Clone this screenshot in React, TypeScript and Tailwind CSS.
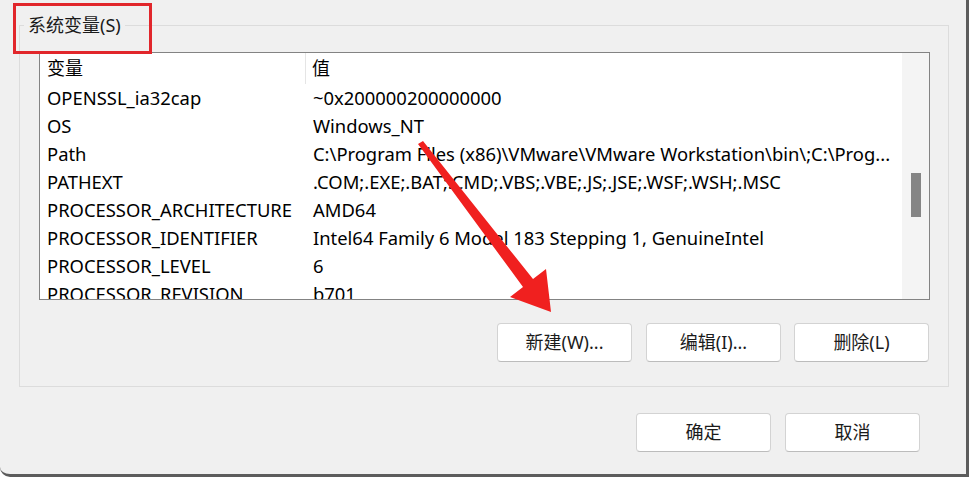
import React from "react";

const rows: [string, string][] = [
  ["OPENSSL_ia32cap", "~0x200000200000000"],
  ["OS", "Windows_NT"],
  ["Path", "C:\\Program Files (x86)\\VMware\\VMware Workstation\\bin\\;C:\\Prog..."],
  ["PATHEXT", ".COM;.EXE;.BAT;.CMD;.VBS;.VBE;.JS;.JSE;.WSF;.WSH;.MSC"],
  ["PROCESSOR_ARCHITECTURE", "AMD64"],
  ["PROCESSOR_IDENTIFIER", "Intel64 Family 6 Model 183 Stepping 1, GenuineIntel"],
  ["PROCESSOR_LEVEL", "6"],
  ["PROCESSOR_REVISION", "b701"],
];

const font = "font-['Noto_Sans','Noto_Sans_CJK_SC',sans-serif]";

const DlgButton = ({ label }: { label: string }) => (
  <button className="w-[135px] h-[39px] bg-white border border-[#d3d3d3] border-b-[#bcbcbc] rounded-[4px] text-[18px] text-[#1b1b1b] flex items-center justify-center">
    {label}
  </button>
);

const App = () => {
  return (
    <div
      className={`relative w-[969px] h-[477px] overflow-hidden bg-[#f0f0f0] border-r-[3px] border-b-[3px] border-[#5c5c5c] rounded-bl-[10px] ${font}`}
    >
      {/* group box */}
      <div className="relative ml-[19px] mt-[25px] w-[930px] h-[362px] border border-[#dcdcdc]">
        <span className="absolute left-[4px] top-[-14px] px-[4px] bg-[#f0f0f0] text-[18px] leading-[26px] text-[#1a1a1a]">
          系统变量(S)
        </span>

        {/* list view */}
        <div className="ml-[19px] mt-[26px] w-[891px] h-[248px] border border-[#838383] bg-white flex overflow-hidden">
          <div className="flex-1 flex flex-col text-[18.4px] text-black overflow-hidden">
            <div className="flex h-[31px] shrink-0 items-center">
              <div className="w-[266px] h-full pl-[7px] flex items-center border-r border-[#e5e5e5] text-[18px]">变量</div>
              <div className="pl-[6px] text-[18px]">值</div>
            </div>
            {rows.map(([k, v]) => (
              <div key={k} className="flex h-[28px] shrink-0 items-center whitespace-nowrap">
                <div className="w-[266px] pl-[7px]">{k}</div>
                <div className="pl-[7px]">{v}</div>
              </div>
            ))}
          </div>
          <div className="w-[27px] bg-[#f4f4f4] pt-[120px] flex justify-center">
            <div className="w-[10px] h-[44px] bg-[#858585]" />
          </div>
        </div>

        <div className="flex justify-end gap-[13px] mt-[23px] mr-[19px]">
          <div className="mr-[1px]">
            <DlgButton label="新建(W)..." />
          </div>
          <DlgButton label="编辑(I)..." />
          <DlgButton label="删除(L)" />
        </div>
      </div>

      <div className="flex justify-end gap-[14px] mt-[26px] mr-[46px]">
        <DlgButton label="确定" />
        <DlgButton label="取消" />
      </div>

      {/* red highlight box */}
      <div className="absolute left-[13px] top-[3px] w-[139px] h-[51px] border-[3px] border-[#e1262b]" />

      {/* red arrow */}
      <svg className="absolute left-0 top-0" width="969" height="477">
        <polygon
          points="418,144 423,141 533,279 546,269 551,312 510,297 523,287"
          fill="#f0201f"
        />
      </svg>
    </div>
  );
};

export default App;
